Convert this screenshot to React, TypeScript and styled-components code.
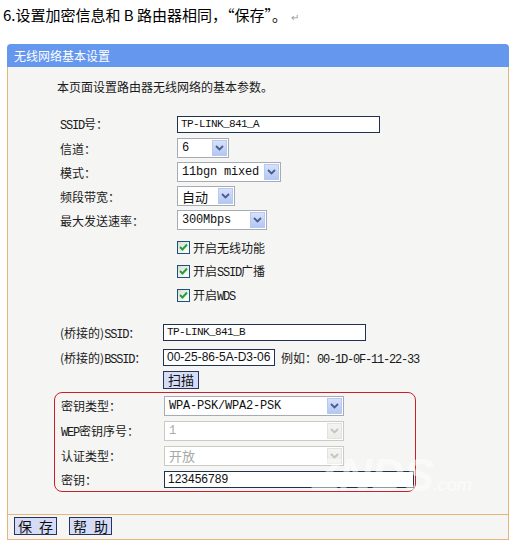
import React, { FC } from 'react';
import styled, { createGlobalStyle } from 'styled-components';

const GlobalStyle = createGlobalStyle`
  body {
    margin: 0;
    background: #ffffff;
    font-family: "Noto Sans CJK SC", sans-serif;
  }
`;

const CJK = '"Noto Sans CJK SC", sans-serif';
const MONO = '"Liberation Mono", "Noto Sans CJK SC", monospace';

/** Page */
const Page = styled.div`
  position: relative;
  width: 515px;
  height: 547px;
  overflow: hidden;
`;

const StepTitle = styled.h1`
  margin: 0;
  padding: 5px 0 0 3px;
  height: 20px;
  line-height: 20px;
  font-family: ${CJK};
  font-size: 15px;
  font-weight: 400;
  color: #000;
`;

const ReturnMark = styled.span`
  margin-left: 4px;
  font-size: 10px;
  color: #999;
`;

/** Panel */
const Panel = styled.section`
  margin: 19px 0 0 7px;
  width: 502px;
  box-sizing: border-box;
`;

const PanelHeader = styled.header`
  height: 23px;
  line-height: 23px;
  padding-left: 7px;
  background: #6597ee;
  border-radius: 4px 4px 0 0;
  color: #fff;
  font-size: 12px;
`;

const PanelBody = styled.div`
  padding: 12px 0 22px 49px;
  background: #f5f5f4;
  border-left: 1px solid #e6b57a;
  border-right: 1px solid #e6b57a;
  box-sizing: border-box;
`;

const Intro = styled.p`
  margin: 0 0 17px 0;
  height: 16px;
  line-height: 16px;
  font-size: 12px;
  color: #1a1a1a;
`;

/** Form rows */
const Section = styled.div<{ $top?: number }>`
  margin-top: ${(p) => p.$top ?? 0}px;
`;

const Row = styled.div<{ $label: number; $h?: number }>`
  display: grid;
  grid-template-columns: ${(p) => p.$label}px auto;
  align-items: center;
  height: ${(p) => p.$h ?? 24}px;
`;

const Label = styled.span`
  padding-left: 3px;
  font-size: 12px;
  color: #1a1a1a;
  white-space: nowrap;
`;

const Latin = styled.span`
  font-family: ${MONO};
  font-size: 12px;
  letter-spacing: -1.2px;
`;

const Field = styled.div`
  display: flex;
  align-items: center;
  gap: 6px;
`;

const TextInput = styled.div<{ $w: number; $sans?: boolean }>`
  width: ${(p) => p.$w}px;
  height: 17px;
  box-sizing: border-box;
  padding-left: 3px;
  border: 1px solid #1f3350;
  background: #fff;
  line-height: 15px;
  font-family: ${(p) => (p.$sans ? '"Liberation Sans", sans-serif' : MONO)};
  font-size: ${(p) => (p.$sans ? 12 : 11)}px;
  letter-spacing: ${(p) => (p.$sans ? 0 : -0.6)}px;
  color: #111;
`;

const Select = styled.div<{ $w: number; $disabled?: boolean }>`
  display: flex;
  align-items: center;
  width: ${(p) => p.$w}px;
  height: 20px;
  box-sizing: border-box;
  padding: 1px;
  border: 1px solid ${(p) => (p.$disabled ? '#cbcbc4' : '#a6acb6')};
  background: #fff;
`;

const SelectValue = styled.span<{ $disabled?: boolean; $cjk?: boolean }>`
  flex: 1;
  padding-left: 3px;
  font-family: ${(p) => (p.$cjk ? CJK : MONO)};
  font-size: ${(p) => (p.$cjk ? 13 : 12)}px;
  letter-spacing: ${(p) => (p.$cjk ? 0 : -0.2)}px;
  color: ${(p) => (p.$disabled ? '#a8a8a8' : '#111')};
  white-space: nowrap;
`;

const ArrowButton = styled.span<{ $disabled?: boolean }>`
  display: flex;
  align-items: center;
  justify-content: center;
  width: 15px;
  height: 16px;
  box-sizing: border-box;
  border: 1px solid ${(p) => (p.$disabled ? '#e2e2de' : '#b8c9f0')};
  background: ${(p) =>
    p.$disabled
      ? 'linear-gradient(#f4f4f2, #ebebe8)'
      : 'linear-gradient(#d6e1fb, #b3c6f4)'};
`;

const Check = styled.label`
  display: flex;
  align-items: center;
  gap: 3px;
  font-size: 12px;
  color: #1a1a1a;
`;

const Box = styled.span`
  display: flex;
  align-items: center;
  justify-content: center;
  width: 13px;
  height: 13px;
  box-sizing: border-box;
  border: 1px solid #1d5280;
  background: linear-gradient(135deg, #dcdcd6, #fff);
`;

const Example = styled.span`
  font-size: 12px;
  color: #1a1a1a;
`;

const SmallButton = styled.button<{ $wide?: boolean }>`
  display: flex;
  align-items: center;
  justify-content: center;
  gap: 7px;
  width: ${(p) => (p.$wide ? '43px' : 'auto')};
  height: 18px;
  padding: 0 4px;
  border: 1px solid #2b3158;
  background: #d5dcf7;
  font-family: ${CJK};
  font-size: ${(p) => (p.$wide ? 14 : 13)}px;
  line-height: 16px;
  white-space: nowrap;
  color: #111;
  cursor: pointer;
`;

/** Outlined group of security fields */
const KeyGroup = styled.div`
  margin: 2px 0 0 -3px;
  width: 362px;
  box-sizing: border-box;
  border: 1px solid #c8202a;
  border-radius: 8px;
  padding-left: 3px;
`;

/** Footer */
const PanelFooter = styled.footer`
  display: flex;
  gap: 12px;
  height: 26px;
  padding: 2px 0 0 6px;
  box-sizing: border-box;
  background: #f5f5f4;
  border: 1px solid #e6b57a;
`;

const Watermark = styled.div`
  position: absolute;
  left: 312px;
  top: 448px;
  font-family: "Liberation Sans", sans-serif;
  font-style: italic;
  font-weight: 900;
  font-size: 46px;
  letter-spacing: -1px;
  color: rgba(255, 255, 255, 0.5);
  pointer-events: none;
`;

const WatermarkSuffix = styled.span`
  font-size: 18px;
  font-weight: 700;
`;

const Chevron: FC<{ disabled?: boolean }> = ({ disabled }) => (
  <svg width="9" height="6" viewBox="0 0 9 6">
    <path
      d="M1 1 L4.5 4.5 L8 1"
      fill="none"
      stroke={disabled ? '#c4c4c0' : '#4a5d8a'}
      strokeWidth="1.8"
    />
  </svg>
);

const Tick: FC = () => (
  <svg width="9" height="8" viewBox="0 0 9 8">
    <path d="M1 4 L3.5 6.5 L8 1.5" fill="none" stroke="#22a236" strokeWidth="2" />
  </svg>
);

const Dropdown: FC<{ w: number; value: string; disabled?: boolean; cjk?: boolean }> = ({
  w,
  value,
  disabled,
  cjk,
}) => (
  <Select $w={w} $disabled={disabled}>
    <SelectValue $disabled={disabled} $cjk={cjk}>
      {value}
    </SelectValue>
    <ArrowButton $disabled={disabled}>
      <Chevron disabled={disabled} />
    </ArrowButton>
  </Select>
);

/** Footer button with its two characters spread apart */
const FormButton: FC<{ text: string }> = ({ text }) => (
  <SmallButton $wide>
    {Array.from(text).map((ch, i) => (
      <span key={i}>{ch}</span>
    ))}
  </SmallButton>
);

const Option: FC<{ children: React.ReactNode }> = ({ children }) => (
  <Row $label={120}>
    <span />
    <Check>
      <Box>
        <Tick />
      </Box>
      <span>{children}</span>
    </Check>
  </Row>
);

const App: FC = () => {
  return (
    <Page>
      <GlobalStyle />
      <StepTitle>
        6.设置加密信息和 B 路由器相同，“保存”。<ReturnMark>↵</ReturnMark>
      </StepTitle>

      <Panel>
        <PanelHeader>无线网络基本设置</PanelHeader>
        <PanelBody>
          <Intro>本页面设置路由器无线网络的基本参数。</Intro>

          <Section>
            <Row $label={120}>
              <Label>
                <Latin>SSID</Latin>号：
              </Label>
              <TextInput $w={203}>TP-LINK_841_A</TextInput>
            </Row>
            <Row $label={120}>
              <Label>信道：</Label>
              <Dropdown w={52} value="6" />
            </Row>
            <Row $label={120}>
              <Label>模式：</Label>
              <Dropdown w={104} value="11bgn mixed" />
            </Row>
            <Row $label={120}>
              <Label>频段带宽：</Label>
              <Dropdown w={58} value="自动" cjk />
            </Row>
            <Row $label={120}>
              <Label>最大发送速率：</Label>
              <Dropdown w={90} value="300Mbps" />
            </Row>
          </Section>

          <Section $top={3}>
            <Option>开启无线功能</Option>
            <Option>
              开启<Latin>SSID</Latin>广播
            </Option>
            <Option>
              开启<Latin>WDS</Latin>
            </Option>
          </Section>

          <Section $top={13}>
            <Row $label={106} $h={25}>
              <Label>
                (桥接的)<Latin>SSID</Latin>：
              </Label>
              <TextInput $w={203}>TP-LINK_841_B</TextInput>
            </Row>
            <Row $label={106} $h={25}>
              <Label>
                (桥接的)<Latin>BSSID</Latin>：
              </Label>
              <Field>
                <TextInput $w={112} $sans>
                  00-25-86-5A-D3-06
                </TextInput>
                <Example>
                  例如：<Latin>00-1D-0F-11-22-33</Latin>
                </Example>
              </Field>
            </Row>
            <Row $label={106} $h={20}>
              <span />
              <Field>
                <SmallButton>扫描</SmallButton>
              </Field>
            </Row>
          </Section>

          <KeyGroup>
            <Row $label={106} $h={25}>
              <Label>密钥类型：</Label>
              <Dropdown w={180} value="WPA-PSK/WPA2-PSK" />
            </Row>
            <Row $label={106} $h={25}>
              <Label>
                <Latin>WEP</Latin>密钥序号：
              </Label>
              <Dropdown w={180} value="1" disabled />
            </Row>
            <Row $label={106} $h={25}>
              <Label>认证类型：</Label>
              <Dropdown w={180} value="开放" disabled cjk />
            </Row>
            <Row $label={106} $h={23}>
              <Label>密钥：</Label>
              <TextInput $w={250} $sans>
                123456789
              </TextInput>
            </Row>
          </KeyGroup>
        </PanelBody>
        <PanelFooter>
          <FormButton text="保存" />
          <FormButton text="帮助" />
        </PanelFooter>
      </Panel>

      <Watermark>
        ZNDS<WatermarkSuffix>.com</WatermarkSuffix>
      </Watermark>
    </Page>
  );
};

export default App;
